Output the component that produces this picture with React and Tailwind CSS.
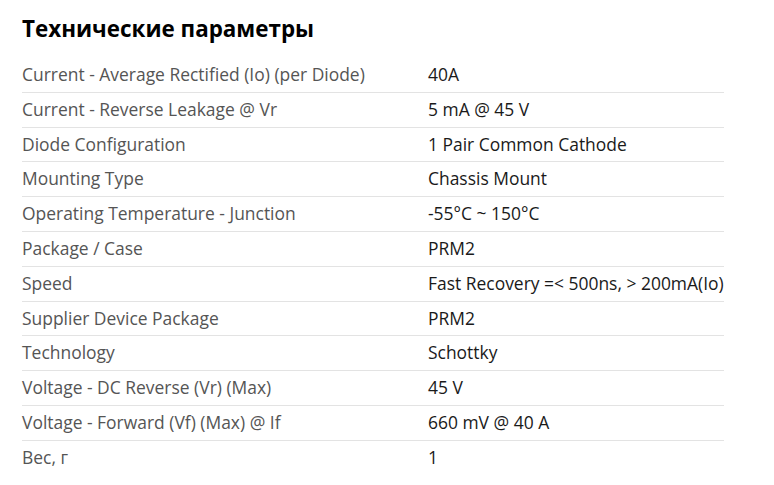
import React from 'react';

const specs = [
  ['Current - Average Rectified (Io) (per Diode)', '40A'],
  ['Current - Reverse Leakage @ Vr', '5 mA @ 45 V'],
  ['Diode Configuration', '1 Pair Common Cathode'],
  ['Mounting Type', 'Chassis Mount'],
  ['Operating Temperature - Junction', '-55°C ~ 150°C'],
  ['Package / Case', 'PRM2'],
  ['Speed', 'Fast Recovery =< 500ns, > 200mA(Io)'],
  ['Supplier Device Package', 'PRM2'],
  ['Technology', 'Schottky'],
  ['Voltage - DC Reverse (Vr) (Max)', '45 V'],
  ['Voltage - Forward (Vf) (Max) @ If', '660 mV @ 40 A'],
  ['Вес, г', '1'],
];

export default function App() {
  return (
    <div className="w-[774px] h-[485px] bg-white pl-[22px] pt-[15px] font-['Open_Sans',sans-serif]">
      <h2 className="text-[22.4px] leading-[28px] font-bold text-black">Технические параметры</h2>
      <div className="mt-[15px] w-[702px]">
        {specs.map(([label, value], i) => (
          <div
            key={label}
            className={`flex whitespace-nowrap py-[5px] text-[17.45px] leading-[23.8px] ${i < specs.length - 1 ? 'border-b border-[#e3e3e3]' : ''}`}
          >
            <div className="w-[406px] shrink-0 text-[#555555]">{label}</div>
            <div className="text-[#1a1a1a]">{value}</div>
          </div>
        ))}
      </div>
    </div>
  );
}
